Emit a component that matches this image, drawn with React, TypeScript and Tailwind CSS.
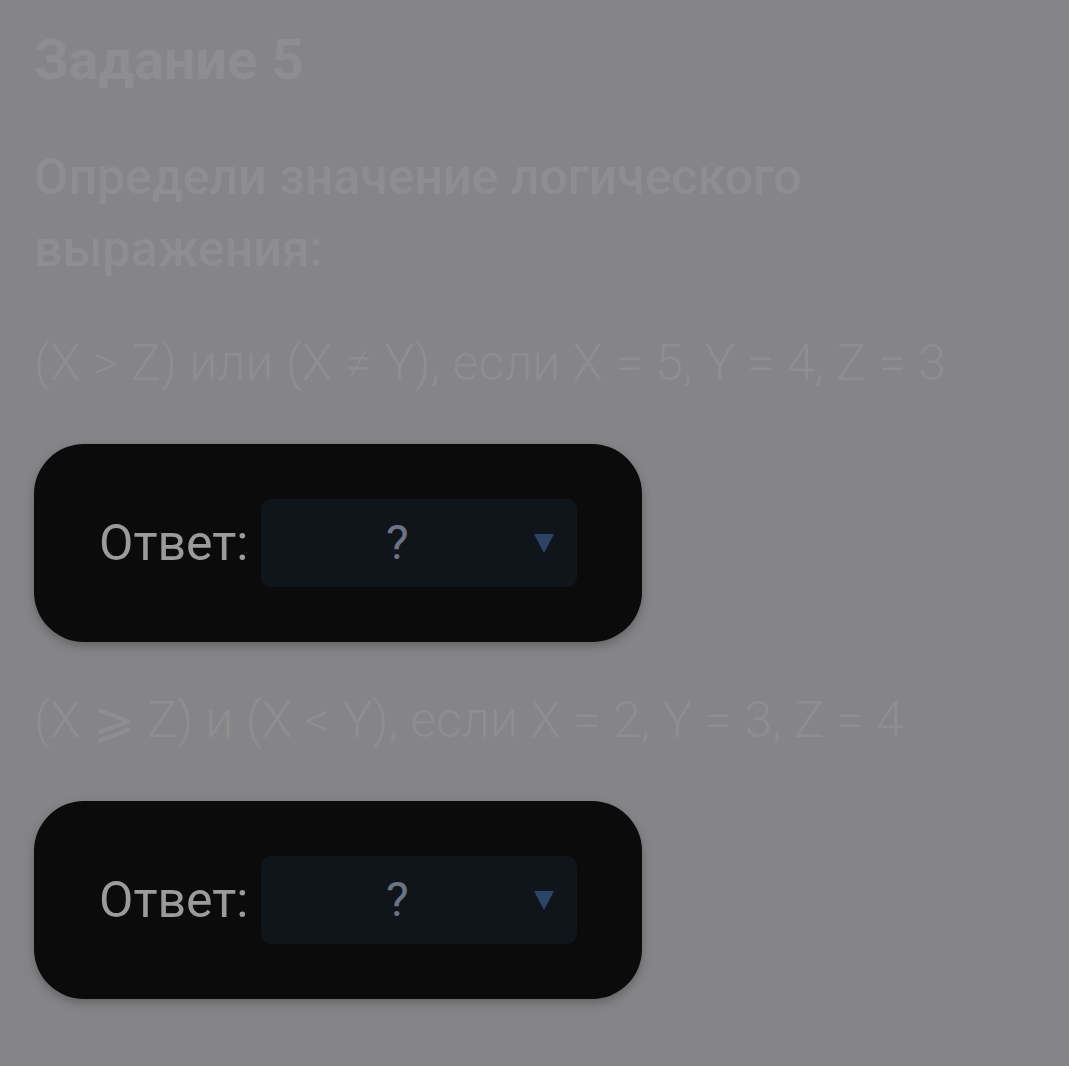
const TASKS = [
  { expr: "(X > Z) или (X ≠ Y), если X = 5, Y = 4, Z = 3" },
  { expr: "(X ⩾ Z) и (X < Y), если X = 2, Y = 3, Z = 4" },
];

function AnswerCard() {
  return (
    <div className="w-[608px] h-[198px] rounded-[50px] bg-[#0b0b0c] shadow-[0_4px_10px_rgba(0,0,0,0.25)] flex items-center pl-[65px]">
      <span className="text-[50px] text-[#9b9b9d] mr-[13px]">Ответ:</span>
      <div className="relative w-[316px] h-[88px] rounded-[10px] bg-[#10151b] flex items-center justify-center pr-[44px]">
        <span className="text-[48px] text-[#6b7384]">?</span>
        <svg className="absolute right-[22px] top-[33px] w-[22px] h-[22px]" viewBox="0 0 22 22">
          <path d="M1 2 H21 L11 21 Z" fill="#2c4566" />
        </svg>
      </div>
    </div>
  );
}

export default function App() {
  return (
    <div className="min-h-[1066px] bg-[#858587] px-[34px] pt-[24px] font-['Roboto',sans-serif] text-[#8e8e90]">
      <h1 className="text-[56px] font-bold leading-[72px]">Задание 5</h1>
      <p className="mt-[45px] text-[50px] font-medium leading-[72px] w-[800px]">
        Определи значение логического выражения:
      </p>
      {TASKS.map((t, i) => (
        <div key={i}>
          <div className={`${i === 0 ? "mt-[42px]" : "mt-[42px]"} text-[50px] font-light leading-[72px] whitespace-nowrap`}>
            {t.expr}
          </div>
          <div className="mt-[45px]">
            <AnswerCard />
          </div>
        </div>
      ))}
    </div>
  );
}
